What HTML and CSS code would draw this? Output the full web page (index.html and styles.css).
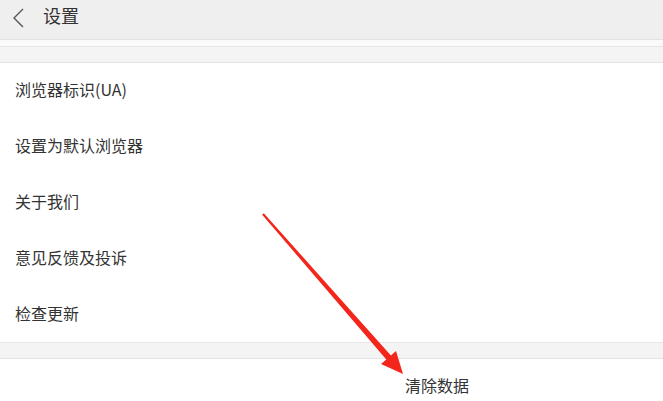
FILE: index.html
```html
<!DOCTYPE html>
<html lang="zh">
<head>
<meta charset="utf-8">
<link rel="stylesheet" href="styles.css">
</head>
<body>
<div class="page">
  <header class="topbar">
    <svg class="back" width="14" height="22" viewBox="0 0 14 22"><polyline points="11,2 2,11 11,20" fill="none" stroke="#555" stroke-width="1.4"/></svg>
    <span class="title">设置</span>
  </header>
  <div class="strip"></div>
  <div class="gap"></div>
  <ul class="list">
    <li>浏览器标识(UA)</li>
    <li>设置为默认浏览器</li>
    <li>关于我们</li>
    <li>意见反馈及投诉</li>
    <li>检查更新</li>
  </ul>
  <div class="gap"></div>
  <div class="clear">清除数据</div>
  <svg class="arrow" width="663" height="401" viewBox="0 0 663 401">
    <polygon points="262.2,214.7 263.8,213.3 390.9,355.4 396,351 403,374 381,364 386.3,359.4" fill="#f4261c"/>
  </svg>
</div>
</body>
</html>
```

FILE: styles.css
```css
* { box-sizing: border-box; }
html, body { margin: 0; padding: 0; }
body {
  width: 663px;
  height: 401px;
  overflow: hidden;
  background: #fff;
  font-family: "Noto Sans CJK SC", "Noto Sans", sans-serif;
  color: #333;
}
.page { position: relative; width: 663px; height: 401px; }
.topbar {
  height: 40px;
  background: #efefef;
  border-bottom: 1px solid #e2e2e2;
  display: flex;
  align-items: center;
  padding-left: 12px;
  padding-bottom: 4px;
}
.back { display: block; margin-top: 1px; }
.title {
  margin-left: 17px;
  font-size: 18px;
  color: #333;
  line-height: 1;
  margin-top: -6px;
}
.strip { height: 6px; background: #fafafa; }
.gap {
  height: 17px;
  background: #f4f4f4;
  border-top: 1px solid #e6e6e6;
  border-bottom: 1px solid #e4e4e4;
}
.list { list-style: none; margin: 0; padding: 0; }
.list li {
  height: 56px;
  display: flex;
  align-items: center;
  padding-left: 15px;
  padding-bottom: 3px;
  font-size: 16px;
  line-height: 1;
}
.list li:first-child { height: 55px; }
.clear {
  height: 56px;
  display: flex;
  align-items: center;
  padding-left: 405px;
  padding-bottom: 4px;
  font-size: 16px;
  line-height: 1;
}
.arrow { position: absolute; left: 0; top: 0; pointer-events: none; }
```
